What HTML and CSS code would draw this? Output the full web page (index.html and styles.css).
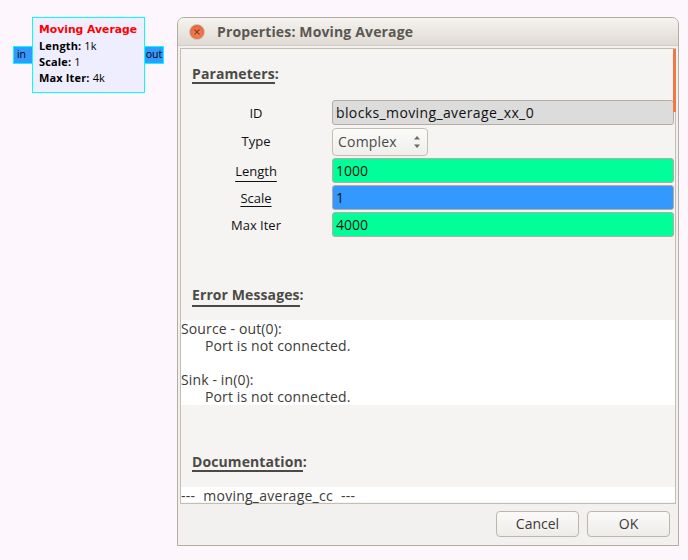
FILE: index.html
```html
<!DOCTYPE html>
<html lang="en">
<head>
  <meta charset="UTF-8">
  <meta name="viewport" content="width=device-width, initial-scale=1.0">
  <title>Properties: Moving Average</title>
  <link rel="stylesheet" href="styles.css">
</head>
<body>
  <div class="block">
    <div class="port port-in">in</div>
    <div class="block-body">
      <div class="block-title">Moving Average</div>
      <div class="block-param"><b>Length:</b> 1k</div>
      <div class="block-param"><b>Scale:</b> 1</div>
      <div class="block-param"><b>Max Iter:</b> 4k</div>
    </div>
    <div class="port port-out">out</div>
  </div>

  <div class="window">
    <div class="titlebar">
      <span class="close">
        <svg width="10" height="10" viewBox="0 0 10 10"><path d="M2.5 2.5l5 5M7.5 2.5l-5 5" stroke="#8a3a1e" stroke-width="1.1" fill="none"/></svg>
      </span>
      <span class="title">Properties: Moving Average</span>
    </div>
    <div class="frame">
      <div class="scrollbar"></div>
      <div class="section section-params">
        <span class="heading"><span class="rule">Parameters</span>:</span>
      </div>
      <div class="rows">
        <div class="row">
          <span class="label">ID</span>
          <div class="entry entry-grey">blocks_moving_average_xx_0</div>
        </div>
        <div class="row row-type">
          <span class="label">Type</span>
          <div class="combo">
            <span>Complex</span>
            <svg width="8" height="14" viewBox="0 0 8 14"><path d="M4 1l3 3.5H1zM4 13l3-3.5H1z" fill="#6b6a66"/></svg>
          </div>
        </div>
        <div class="row">
          <span class="label"><u class="low">Length</u></span>
          <div class="entry entry-green">1000</div>
        </div>
        <div class="row">
          <span class="label"><u>Scale</u></span>
          <div class="entry entry-blue">1</div>
        </div>
        <div class="row">
          <span class="label">Max Iter</span>
          <div class="entry entry-green">4000</div>
        </div>
      </div>
      <div class="section section-errors">
        <span class="heading"><span class="rule rule-low">Error Messages</span>:</span>
      </div>
      <div class="textview errors">
        <div>Source - out(0):</div>
        <div class="indent">Port is not connected.</div>
        <div class="blank"></div>
        <div>Sink - in(0):</div>
        <div class="indent">Port is not connected.</div>
      </div>
      <div class="section section-docs">
        <span class="heading"><span class="rule">Documentation</span>:</span>
      </div>
      <div class="textview docs">
        <span>---</span>
        <span>moving_average_cc</span>
        <span>---</span>
      </div>
    </div>
    <div class="actions">
      <button>Cancel</button>
      <button>OK</button>
    </div>
  </div>
</body>
</html>
```

FILE: styles.css
```css
body {
  margin: 0;
  width: 688px;
  height: 560px;
  overflow: hidden;
  position: relative;
  background-color: #fdf7fd;
  font-family: "Open Sans", "Noto Sans", sans-serif;
  font-size: 13px;
  color: #3c3b37;
}

/* flowgraph block */
.block {
  position: absolute;
  left: 13px;
  top: 17px;
  display: flex;
  align-items: flex-start;
  color: #000;
}

.block-body {
  box-sizing: border-box;
  width: 113px;
  height: 76px;
  padding: 4px 6px;
  border: 1px solid #00ffff;
  background-color: #eeeeff;
  font-size: 11px;
  line-height: 16px;
  letter-spacing: 0.15px;
}

.block-title {
  color: #ff0000;
  font-family: "DejaVu Sans", sans-serif;
  font-weight: bold;
  font-size: 10.8px;
  letter-spacing: 0;
  white-space: nowrap;
}

.port {
  box-sizing: border-box;
  width: 19px;
  height: 18px;
  margin-top: 29px;
  border: 1px solid #00ffff;
  background-color: #3399ff;
  font-size: 10.5px;
  line-height: 15px;
  text-align: center;
}

.port-in {
  border-right: none;
  padding-right: 3px;
}

.port-out {
  border-left: none;
}

/* properties dialog */
.window {
  position: absolute;
  left: 177px;
  top: 17px;
  box-sizing: border-box;
  width: 502px;
  height: 529px;
  border: 1px solid #b5aca2;
  border-radius: 7px 7px 0 0;
  background-color: #f2f1ef;
  display: flex;
  flex-direction: column;
}

.titlebar {
  height: 27px;
  flex: none;
  display: flex;
  align-items: center;
  padding-left: 11px;
  gap: 12px;
  border-radius: 6px 6px 0 0;
  background: linear-gradient(#f6f4f0, #dfdad3);
  border-bottom: 1px solid #cfc9c0;
}

.close {
  width: 16px;
  height: 16px;
  border-radius: 50%;
  background: radial-gradient(circle at 50% 60%, #f58a5c, #dd5a2c);
  border: 1px solid #c9c3ba;
  box-sizing: border-box;
  display: flex;
  align-items: center;
  justify-content: center;
}

.title {
  font-size: 14px;
  font-weight: bold;
  letter-spacing: 0.15px;
  color: #5a5752;
}

.frame {
  position: relative;
  flex: none;
  box-sizing: border-box;
  height: 456px;
  margin: 2px 2px 0;
  border: 1px solid #c4bdb3;
  background-color: #f5f4f2;
}

.scrollbar {
  position: absolute;
  right: -1px;
  top: 0;
  width: 3px;
  height: 63px;
  background-color: #f07746;
}

.section {
  padding-left: 11px;
}

.section-params {
  padding-top: 16px;
  height: 35px;
}

.section-errors {
  padding-top: 6px;
  height: 34px;
}

.section-docs {
  padding-top: 48px;
  height: 34px;
}

.heading {
  display: inline-block;
  font-weight: bold;
  font-size: 14px;
  line-height: 16px;
  letter-spacing: 0.1px;
  color: #4c4a47;
}

.rule {
  display: inline-block;
  border-bottom: 2px solid #4c4a47;
}

.rule-low {
  padding-bottom: 2px;
}

.rows {
  display: flex;
  flex-direction: column;
  gap: 2px;
  height: 180px;
}

.row {
  display: flex;
  align-items: center;
  height: 25px;
  flex: none;
}

.row-type {
  height: 28px;
  margin-top: 1px;
}

.row-type .label {
  margin-bottom: 2px;
}

.label {
  width: 150px;
  margin-right: 1px;
  text-align: center;
  color: #111;
}

.label u {
  text-underline-offset: 3px;
  text-decoration-skip-ink: none;
}

.label u.low {
  text-underline-offset: 5px;
}

.entry {
  box-sizing: border-box;
  width: 342px;
  height: 25px;
  padding-left: 3px;
  border: 1px solid #b5aca2;
  border-radius: 3px;
  font-size: 14px;
  line-height: 23px;
  color: #111;
}

.entry-grey {
  background-color: #dcdcdc;
  letter-spacing: 0.38px;
}

.entry-green {
  background-color: #00ff99;
}

.entry-blue {
  background-color: #3399ff;
}

.combo {
  box-sizing: border-box;
  width: 96px;
  height: 28px;
  display: flex;
  align-items: center;
  justify-content: space-between;
  padding: 0 6px 1px 5px;
  border: 1px solid #c4bdb3;
  border-radius: 4px;
  background: linear-gradient(#fbfbfa, #efeeeb);
  font-size: 14px;
  letter-spacing: 0.2px;
  color: #4c4a47;
}

.textview {
  background-color: #fff;
  font-size: 14px;
  line-height: 17px;
  letter-spacing: 0.13px;
  color: #3c3b37;
}

.errors {
  height: 85px;
}

.indent {
  padding-left: 24px;
}

.blank {
  height: 17px;
}

.docs {
  box-sizing: border-box;
  height: 15px;
  padding-top: 2px;
  line-height: 13px;
  display: flex;
  gap: 8px;
  white-space: nowrap;
  letter-spacing: 0.25px;
}

.actions {
  flex: 1;
  display: flex;
  justify-content: flex-end;
  gap: 8px;
  padding: 7px 8px 0 0;
}

button {
  box-sizing: border-box;
  width: 83px;
  height: 26px;
  border: 1px solid #bdb6ac;
  border-radius: 4px;
  background: linear-gradient(#fbfaf9, #eeece9);
  font-family: inherit;
  font-size: 14px;
  color: #3c3b37;
  padding: 0 0 1px;
}
```
